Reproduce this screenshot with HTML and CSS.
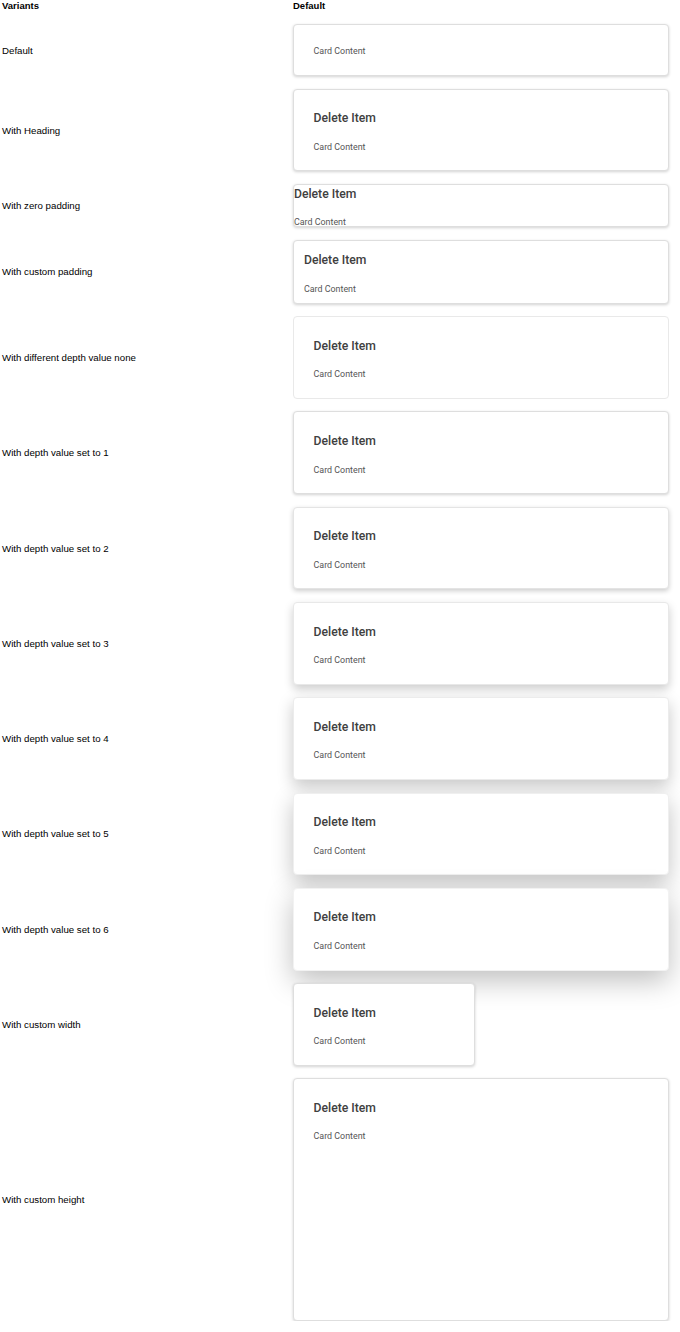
FILE: index.html
```html
<!DOCTYPE html>
<html lang="en">
<head>
<meta charset="utf-8">
<title>Card variants</title>
<link rel="stylesheet" href="styles.css">
</head>
<body>
<div class="table">
  <div class="th">Variants</div>
  <div class="th">Default</div>

  <div class="label">Default</div>
  <div class="cell"><div class="card d1 plain"><p class="content">Card Content</p></div></div>

  <div class="label">With Heading</div>
  <div class="cell"><div class="card d1"><h3 class="heading">Delete Item</h3><p class="content">Card Content</p></div></div>

  <div class="label">With zero padding</div>
  <div class="cell"><div class="card d1 pad-0"><h3 class="heading">Delete Item</h3><p class="content">Card Content</p></div></div>

  <div class="label">With custom padding</div>
  <div class="cell"><div class="card d1 pad-10"><h3 class="heading">Delete Item</h3><p class="content">Card Content</p></div></div>

  <div class="label">With different depth value none</div>
  <div class="cell"><div class="card d0"><h3 class="heading">Delete Item</h3><p class="content">Card Content</p></div></div>

  <div class="label">With depth value set to 1</div>
  <div class="cell"><div class="card d1"><h3 class="heading">Delete Item</h3><p class="content">Card Content</p></div></div>

  <div class="label">With depth value set to 2</div>
  <div class="cell"><div class="card d2"><h3 class="heading">Delete Item</h3><p class="content">Card Content</p></div></div>

  <div class="label">With depth value set to 3</div>
  <div class="cell"><div class="card d3"><h3 class="heading">Delete Item</h3><p class="content">Card Content</p></div></div>

  <div class="label">With depth value set to 4</div>
  <div class="cell"><div class="card d4"><h3 class="heading">Delete Item</h3><p class="content">Card Content</p></div></div>

  <div class="label">With depth value set to 5</div>
  <div class="cell"><div class="card d5"><h3 class="heading">Delete Item</h3><p class="content">Card Content</p></div></div>

  <div class="label">With depth value set to 6</div>
  <div class="cell"><div class="card d6"><h3 class="heading">Delete Item</h3><p class="content">Card Content</p></div></div>

  <div class="label">With custom width</div>
  <div class="cell"><div class="card d1 narrow"><h3 class="heading">Delete Item</h3><p class="content">Card Content</p></div></div>

  <div class="label">With custom height</div>
  <div class="cell"><div class="card d1 tall"><h3 class="heading">Delete Item</h3><p class="content">Card Content</p></div></div>
</div>
</body>
</html>
```
FILE: styles.css
```css
html, body {
  margin: 0;
  padding: 0;
  background: #fff;
}

body {
  font-family: "Liberation Sans", Arial, sans-serif;
  color: #000;
}

.table {
  display: grid;
  grid-template-columns: 291px 376px;
  row-gap: 12.6px;
  padding: 1px 0 0 2px;
  align-items: center;
}

.th {
  font-size: 9.5px;
  line-height: 10.5px;
  font-weight: bold;
  align-self: start;
}

.label {
  font-size: 9.7px;
  line-height: 11px;
}

.cell {
  display: flex;
}

.card {
  box-sizing: border-box;
  width: 376px;
  background: #fff;
  border: 1px solid #dedede;
  border-radius: 4px;
  padding: 19.6px;
  font-family: Roboto, "Noto Sans", sans-serif;
}

.heading {
  margin: 0 0 14.5px;
  font-size: 12.2px;
  line-height: 19px;
  font-weight: 500;
  color: #404040;
}

.content {
  margin: 0;
  font-size: 8.9px;
  line-height: 8px;
  color: #555;
}

.plain .content {
  padding-top: 3px;
  line-height: 7.8px;
}

.pad-0 { padding: 0; }
.pad-10 { padding: 10px; }
.narrow { width: 182px; }
.tall { height: 243px; }

.d0 { border-color: #e9e9e9; box-shadow: none; }
.d1 { box-shadow: 0 1px 3px rgba(0, 0, 0, 0.18); }
.d2 { box-shadow: 0 2px 5px rgba(0, 0, 0, 0.2); border-color: #e4e4e4; }
.d3 { box-shadow: 0 4px 10px rgba(0, 0, 0, 0.2); border-color: #e8e8e8; }
.d4 { box-shadow: 0 6px 16px rgba(0, 0, 0, 0.22); border-color: #ececec; }
.d5 { box-shadow: 0 8px 22px rgba(0, 0, 0, 0.24); border-color: #efefef; }
.d6 { box-shadow: 0 10px 28px rgba(0, 0, 0, 0.25); border-color: #f2f2f2; }
```
